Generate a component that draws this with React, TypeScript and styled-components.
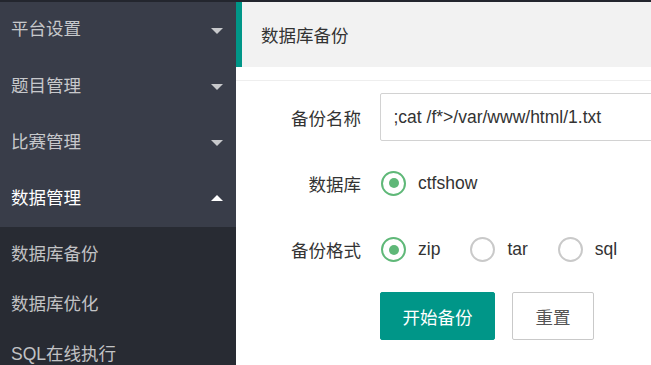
import React from "react";
import styled, { createGlobalStyle } from "styled-components";

const Global = createGlobalStyle`
  html, body { margin: 0; padding: 0; overflow: hidden; background: #fff; }
  body { font-family: "Liberation Sans", Arial, "Noto Sans CJK SC", sans-serif; font-size: 17.5px; color: #333; }
  * { box-sizing: border-box; }
`;

const Page = styled.div`
  width: 651px;
  height: 365px;
  display: flex;
  flex-direction: column;
  overflow: hidden;
`;

const TopStrip = styled.div`
  height: 2px;
  flex: none;
  background: #23262e;
`;

const Body = styled.div`
  flex: 1;
  display: flex;
  min-height: 0;
`;

const Sidebar = styled.nav`
  width: 236px;
  flex: none;
  background: #393d49;
  display: flex;
  flex-direction: column;
`;

const NavItem = styled.div<{ $active?: boolean }>`
  height: 56.25px;
  flex: none;
  display: flex;
  align-items: center;
  justify-content: space-between;
  padding: 0 13px 0 11px;
  color: ${(p) => (p.$active ? "#fff" : "rgba(255,255,255,0.72)")};
  font-size: 17.5px;
  line-height: 1;
`;

const Caret = styled.span<{ $up?: boolean }>`
  width: 0;
  height: 0;
  border-left: 6.5px solid transparent;
  border-right: 6.5px solid transparent;
  ${(p) =>
    p.$up
      ? `border-bottom: 6.5px solid #fff; margin-top: -2px;`
      : `border-top: 6.5px solid rgba(255,255,255,0.72); margin-top: 1px;`}
`;

const SubMenu = styled.div`
  flex: 1;
  background: #282b33;
  display: flex;
  flex-direction: column;
`;

const SubItem = styled.div`
  height: 50px;
  flex: none;
  display: flex;
  align-items: center;
  padding-left: 11px;
  color: rgba(255,255,255,0.72);
  font-size: 17.5px;
`;

const Main = styled.main`
  flex: 1;
  min-width: 0;
  overflow: hidden;
  display: flex;
  flex-direction: column;
`;

const Quote = styled.div`
  height: 64.5px;
  flex: none;
  background: #f2f2f2;
  border-left: 6px solid #009688;
  display: flex;
  align-items: center;
  padding-left: 19px;
  font-size: 17.5px;
  color: #333;
`;

const Divider = styled.div`
  height: 1px;
  flex: none;
  margin-top: 13.5px;
  background: #eeeeee;
`;

const Form = styled.form`
  display: flex;
  flex-direction: column;
  gap: 18.75px;
  padding-top: 12.25px;
`;

const Row = styled.div`
  display: flex;
  align-items: center;
  height: 47.5px;
`;

const Label = styled.label`
  width: 144px;
  flex: none;
  padding-right: 19px;
  text-align: right;
  font-size: 17.5px;
  color: #333;
`;

const TextInput = styled.input`
  width: 420px;
  flex: none;
  height: 47.5px;
  border: 1px solid #d2d2d2;
  border-radius: 2px;
  padding: 0 12.5px;
  font-family: "Liberation Sans", Arial, sans-serif;
  font-size: 17.5px;
  color: #333;
  outline: none;
  background: #fff;
`;

const RadioGroup = styled.div`
  display: flex;
  align-items: center;
`;

const RadioOpt = styled.span`
  display: flex;
  align-items: center;
  margin-right: 29px;
  font-size: 17.5px;
  color: #333;
`;

const Circle = styled.span<{ $on?: boolean }>`
  width: 25px;
  height: 25px;
  border-radius: 50%;
  border: 2px solid ${(p) => (p.$on ? "#5fb878" : "#c9c9c9")};
  display: flex;
  align-items: center;
  justify-content: center;
  margin-right: 12px;
  margin-left: 1px;
  &::after {
    content: "";
    display: ${(p) => (p.$on ? "block" : "none")};
    width: 10px;
    height: 10px;
    border-radius: 50%;
    background: #5fb878;
  }
`;

const Buttons = styled.div`
  display: flex;
  gap: 17px;
  padding-left: 144px;
`;

const Button = styled.button<{ $primary?: boolean; $w: number }>`
  width: ${(p) => p.$w}px;
  height: 48px;
  padding: 0;
  border-radius: 2px;
  font-family: "Liberation Sans", Arial, "Noto Sans CJK SC", sans-serif;
  font-size: 17.5px;
  cursor: pointer;
  background: ${(p) => (p.$primary ? "#009688" : "#fff")};
  color: ${(p) => (p.$primary ? "#fff" : "#555")};
  border: 1px solid ${(p) => (p.$primary ? "#009688" : "#c9c9c9")};
`;

export default function App() {
  return (
    <>
      <Global />
      <Page>
        <TopStrip />
        <Body>
          <Sidebar>
            <NavItem>平台设置<Caret /></NavItem>
            <NavItem>题目管理<Caret /></NavItem>
            <NavItem>比赛管理<Caret /></NavItem>
            <NavItem $active>数据管理<Caret $up /></NavItem>
            <SubMenu>
              <SubItem>数据库备份</SubItem>
              <SubItem>数据库优化</SubItem>
              <SubItem>SQL在线执行</SubItem>
            </SubMenu>
          </Sidebar>
          <Main>
            <Quote>数据库备份</Quote>
            <Divider />
            <Form onSubmit={(e) => e.preventDefault()}>
              <Row>
                <Label>备份名称</Label>
                <TextInput defaultValue=";cat /f*>/var/www/html/1.txt" />
              </Row>
              <Row>
                <Label>数据库</Label>
                <RadioGroup>
                  <RadioOpt><Circle $on />ctfshow</RadioOpt>
                </RadioGroup>
              </Row>
              <Row>
                <Label>备份格式</Label>
                <RadioGroup>
                  <RadioOpt><Circle $on />zip</RadioOpt>
                  <RadioOpt><Circle />tar</RadioOpt>
                  <RadioOpt><Circle />sql</RadioOpt>
                </RadioGroup>
              </Row>
              <Buttons>
                <Button $primary $w={115} type="button">开始备份</Button>
                <Button $w={82} type="button">重置</Button>
              </Buttons>
            </Form>
          </Main>
        </Body>
      </Page>
    </>
  );
}
